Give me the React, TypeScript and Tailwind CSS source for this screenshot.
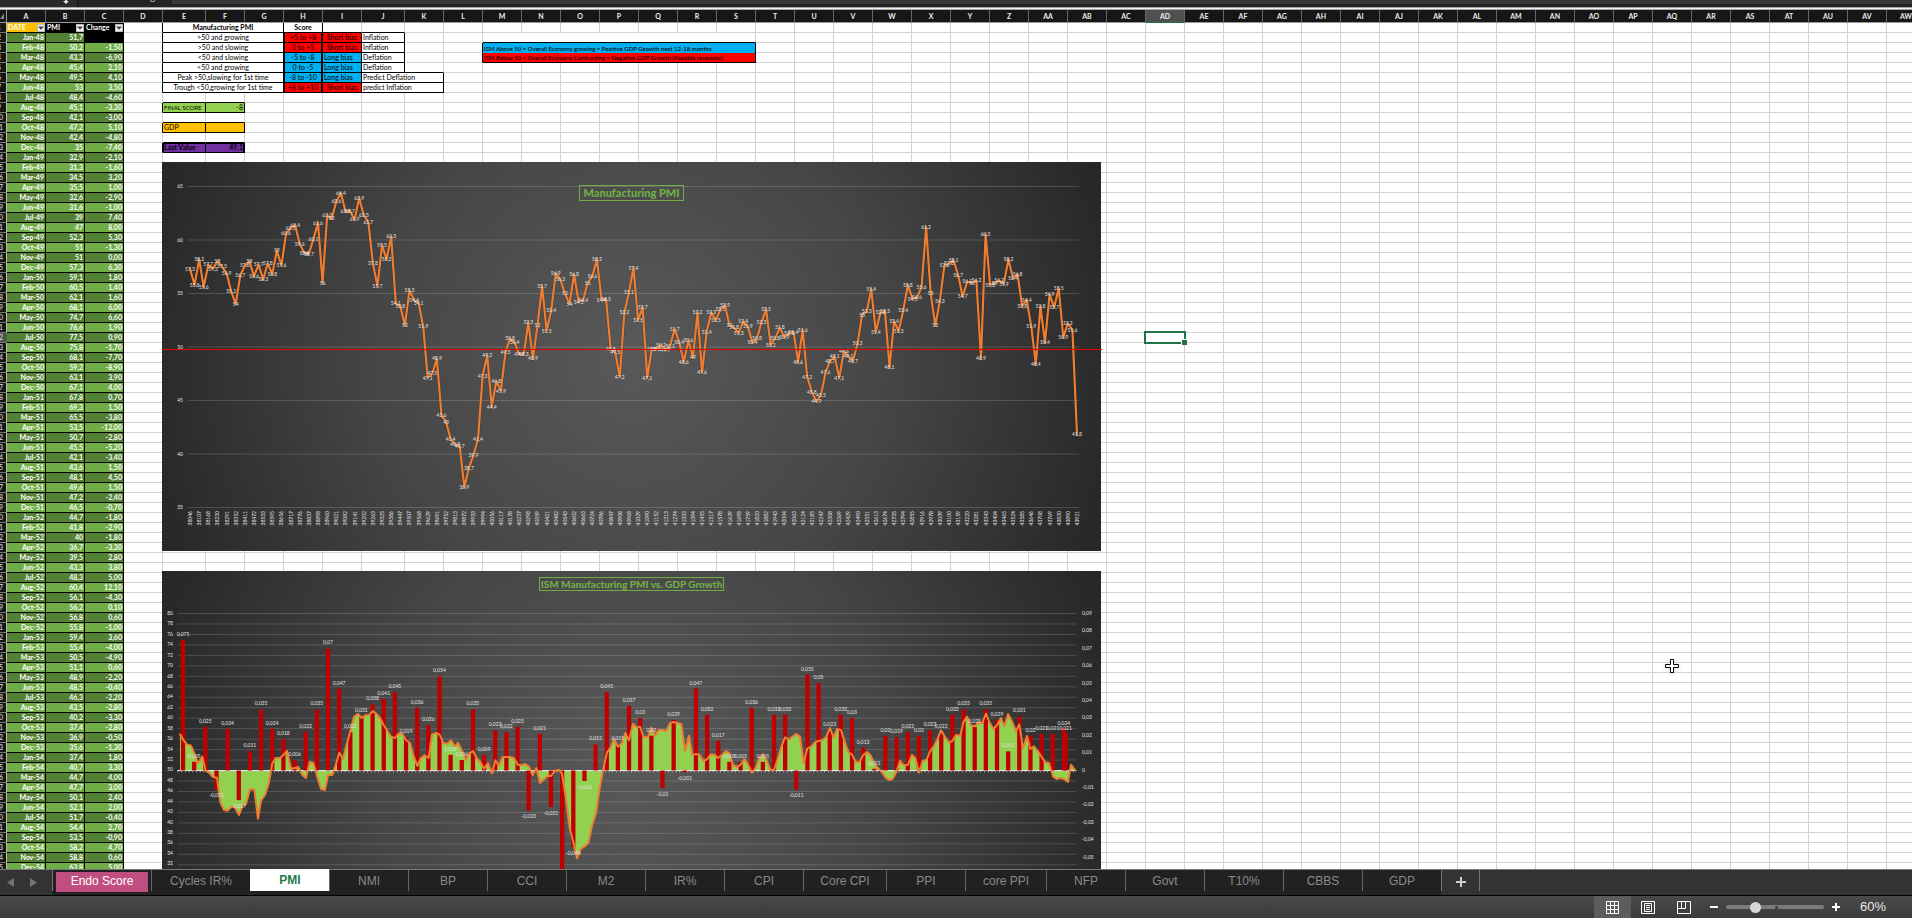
import React from "react";

type Cell = { text?: string; span?: number; right?: boolean; bottom?: boolean; look?: string };

const columnName = (n: number): string =>
  n < 26 ? String.fromCharCode(65 + n) : columnName(Math.floor(n / 26) - 1) + String.fromCharCode(65 + (n % 26));

const COLUMNS = Array.from({ length: 49 }, (_, i) => columnName(i));
const ROWS = Array.from({ length: 85 }, (_, i) => i + 1);
const MONTHS = ["Jan", "Feb", "Mar", "Apr", "May", "Jun", "Jul", "Aug", "Sep", "Oct", "Nov", "Dec"];

const HISTORY = [
  51.7, 50.2, 43.3, 45.4, 49.5, 53, 48.4, 45.1, 42.1, 47.2, 42.4, 35,
  32.9, 31.3, 34.5, 35.5, 32.6, 31.6, 39, 47, 52.3, 51, 51, 57.3,
  59.1, 60.5, 62.1, 68.1, 74.7, 76.6, 77.5, 75.8, 68.1, 59.2, 63.1, 67.1,
  67.8, 69.3, 65.5, 53.5, 50.7, 45.5, 42.1, 43.6, 48.1, 49.6, 47.2, 46.5,
  44.7, 41.8, 40, 36.7, 39.5, 43.3, 48.3, 60.4, 56.1, 56.2, 56.8, 55.8,
  59.4, 55.4, 50.5, 51.1, 48.9, 48.5, 46.3, 43.5, 40.2, 37.4, 36.9, 35.6,
  37.4, 40.7, 44.7, 47.7, 50.1, 52.1, 51.7, 54.4, 53.5, 58.2, 58.8, 63.8,
];

const comma = (v: number | string) => String(v).replace(".", ",");

const RED = "bg-[#ff0000] text-black";
const BLUE = "bg-[#00b0f0] text-black";
const CENTER = "text-center";

const CELLS: Record<string, Cell> = {
  E1: { text: "Manufacturing PMI", span: 3, right: true, bottom: true, look: "text-center font-bold" },
  H1: { text: "Score", right: true, bottom: true, look: "text-center font-bold" },
  I1: { bottom: true },
  J1: { bottom: true },
  K5: { bottom: true },
  M2: { span: 7, bottom: true },
  L3: { right: true },
  L4: { right: true },
  M3: { text: "ISM Above 50 = Overall Economy growing = Positive GDP Geowth next 12-18 months", span: 7, right: true, look: BLUE + " border-b-0 text-[6px] font-medium" },
  M4: { text: "ISM Below 50 = Overall Economy Contracting = Negative GDP Growth (Possible recession)", span: 7, right: true, bottom: true, look: RED + " text-[6px] font-medium" },
  D9: { right: true },
  D11: { right: true },
  D13: { right: true },
  E9: { text: "FINAL SCORE", right: true, bottom: true, look: "bg-[#92d050] text-[6px]" },
  F9: { text: "-8", right: true, bottom: true, look: "bg-[#92d050] text-right" },
  E11: { text: "GDP", right: true, bottom: true, look: "bg-[#ffc000]" },
  F11: { right: true, bottom: true, look: "bg-[#ffc000]" },
  E13: { text: "Last Value", right: true, bottom: true, look: "bg-[#7030a0] font-bold shadow-[inset_1px_1px_0_#000]" },
  F13: { text: "49,1", right: true, bottom: true, look: "bg-[#7030a0] text-right font-bold shadow-[inset_-1px_1px_0_#000]" },
};

[8, 10, 12].forEach((r) => {
  CELLS["E" + r] = { bottom: true };
  CELLS["F" + r] = { bottom: true };
});

const RULES: [string, string, string, string][] = [
  [">50 and growing", "+5 to +8", "Short bias", "Inflation"],
  [">50 and slowing", "0 to +5", "Short bias", "Inflation"],
  ["<50 and slowing", "-5 to -8", "Long bias", "Deflation"],
  ["<50 and growing", "0 to -5", "Long bias", "Deflation"],
  ["Peak >50,slowing for 1st time", "-8 to -10", "Long bias", "Predict Deflation"],
  ["Trough <50,growing for 1st time", "+8 to +10", "Short bias", "predict Inflation"],
];

CELLS.D1 = { right: true };
RULES.forEach(([rule, score, bias, outlook], i) => {
  const r = i + 2;
  const short = bias === "Short bias";
  const fill = short ? RED : BLUE;
  CELLS["D" + r] = { right: true };
  CELLS["E" + r] = { text: rule, span: 3, right: true, bottom: true, look: CENTER };
  CELLS["H" + r] = { text: score, right: true, bottom: true, look: fill + " text-center shadow-[inset_1px_0_0_#000,inset_-1px_0_0_#000]" };
  CELLS["I" + r] = { text: bias, right: true, bottom: true, look: fill + (short ? " text-center" : "") };
  CELLS["J" + r] = { text: outlook, span: i > 3 ? 2 : 1, right: true, bottom: true };
});

function FilterButton({ label }: { label: string }) {
  return (
    <button aria-label={label} className="flex h-2 w-2 shrink-0 items-center justify-center border border-[#bdbdbd] bg-[#f2f2f2]">
      <svg viewBox="0 0 6 4" className="h-1 w-1.5"><path d="M0 .5h6L3 3.8z" fill="#444" /></svg>
    </button>
  );
}

function SeriesCells({ row }: { row: number }) {
  if (row === 1) {
    return (
      <>
        {["DATE", "PMI", "Change"].map((t, i) => (
          <td key={t} className={"overflow-hidden border-r border-b border-black p-0 text-[7px] font-bold text-white " + (i === 0 ? "bg-[#ffc000]" : "bg-black")}>
            <div className="flex h-[9px] items-center justify-between pl-px">
              {t}
              <FilterButton label={"Filter " + t} />
            </div>
          </td>
        ))}
      </>
    );
  }
  const i = row - 2;
  const fill = row % 2 === 0 ? "bg-[#548235]" : "bg-[#70ad47]";
  const base = "overflow-hidden border-r border-b border-black py-0 pr-px pl-0 text-right font-bold text-white text-[7px] ";
  const known = i < HISTORY.length;
  const change = i > 0 && known ? Math.round((HISTORY[i] - HISTORY[i - 1]) * 10) / 10 : 0;
  return (
    <>
      <td className={base + fill}>{known ? `${MONTHS[i % 12]}-${48 + Math.floor(i / 12)}` : ""}</td>
      <td className={base + fill}>{known ? comma(HISTORY[i]) : ""}</td>
      <td className={base + (i === 0 ? "bg-black" : fill)}>{i > 0 && known ? comma(change.toFixed(2)) : ""}</td>
    </>
  );
}

function Row({ row }: { row: number }) {
  const cells: React.ReactNode[] = [];
  for (let c = 3; c < COLUMNS.length; ) {
    const id = COLUMNS[c] + row;
    const cell = CELLS[id] ?? {};
    cells.push(
      <td
        key={id}
        colSpan={cell.span ?? 1}
        className={
          "border-r border-b px-px py-0 " +
          (id === "AD32" ? "relative " : "overflow-hidden ") +
          (cell.right ? "border-r-black " : "border-r-[#d2d2d2] ") +
          (cell.bottom ? "border-b-black " : "border-b-[#d2d2d2] ") +
          (cell.look ?? "")
        }
      >
        {cell.text}
        {id === "AD32" && (
          <span className="absolute -inset-0.5 border-2 border-[#217346]">
            <span className="absolute -right-[3px] -bottom-[3px] h-1.5 w-1.5 border-t border-l border-white bg-[#217346]" />
          </span>
        )}
      </td>,
    );
    c += cell.span ?? 1;
  }
  const selected = row === 32;
  return (
    <tr className="h-[10px]">
      <th
        scope="row"
        className={
          "border-r border-b border-b-[#777] p-0 font-normal text-[#e0e0e0] " +
          (selected ? "border-r-[#217346] bg-[#505050]" : "border-r-[#bdbdbd] bg-[#161616]")
        }
      >
        <div className="-ml-2 w-3.5 text-center text-[7px]">{row}</div>
      </th>
      <SeriesCells row={row} />
      {cells}
    </tr>
  );
}

function Sheet() {
  return (
    <table className="w-max table-fixed border-separate border-spacing-0 text-[7px] leading-[9px] whitespace-nowrap text-black">
      <colgroup>
        <col className="w-[7px]" />
        {COLUMNS.map((c) => (
          <col key={c} className={c === "E" || c === "J" ? "w-[43px]" : "w-[39px]"} />
        ))}
      </colgroup>
      <thead>
        <tr className="h-[13px] text-[7px]">
          <td className="border-r border-b border-[#9a9a9a] bg-[#161616] p-0">
            <svg viewBox="0 0 6 12" className="block h-3 w-1.5"><path d="M4 3.500v5.500H0z" fill="#8a8a8a" /></svg>
          </td>
          {COLUMNS.map((c) => (
            <th
              key={c}
              scope="col"
              className={
                "border-r border-b border-r-[#666] p-0 text-center font-bold text-[#ededed] " +
                (c === "AD" ? "border-b-[#217346] bg-[#505050]" : "border-b-[#9a9a9a] bg-[#161616]")
              }
            >
              {c}
            </th>
          ))}
        </tr>
      </thead>
      <tbody>
        {ROWS.map((r) => (
          <Row key={r} row={r} />
        ))}
      </tbody>
    </table>
  );
}

const PMI = [
  57.3, 55.8, 58.2, 55.6, 57.7, 57.3, 58, 57.5, 56.9, 55.2, 54, 56.7, 57.6, 58, 56.6, 57.7, 56.3, 57.8, 56.8, 59,
  57.6, 60.6, 61.1, 61.4, 59.6, 58.8, 58.7, 60.1, 61.6, 56, 62.3, 62, 63.6, 64.4, 62.7, 62.7, 61.9, 63.9, 62.3, 61.7,
  57.8, 55.7, 59.5, 58.2, 60.3, 54.1, 53.8, 52, 55.3, 54.4, 54.1, 51.9, 47.1, 47.5, 48.9, 43.6, 43, 41.4, 40.9, 40.7,
  36.9, 38.7, 39.9, 41.4, 47.3, 49.2, 44.4, 46.8, 45.9, 49.5, 50.8, 50.4, 49.3, 49.3, 52.3, 48.9, 52, 55.7, 51.5, 53.4,
  56.9, 56.3, 55, 54, 56.8, 54.2, 54.4, 56, 56.6, 58.2, 54.4, 54.5, 49.8, 49.5, 47.2, 53.2, 55.1, 57.4, 52.5, 53.7,
  47.1, 49.8, 49.8, 50.2, 49.7, 50.1, 51.7, 50.4, 48.6, 50.6, 49, 53.2, 47.6, 51.4, 53.2, 52.5, 53.5, 53.9, 52, 51.8,
  51.3, 52.4, 51.9, 50.4, 50.8, 52.3, 53.5, 50.2, 50.8, 51.8, 50.9, 51.3, 51.4, 48.6, 51.6, 47.2, 45.8, 44.9, 45.5, 47.6,
  48.7, 49.1, 47.1, 49.6, 49.1, 48.7, 50.3, 53, 53.3, 55.4, 51.4, 53.2, 53.3, 48.1, 52.4, 51.5, 53.4, 55.8, 54.5, 54.6,
  55.6, 61.2, 55, 52, 54.3, 57.6, 57.8, 58.1, 56.7, 54.7, 56.1, 56, 56.2, 48.9, 60.5, 55.8, 56, 56.2, 55.9, 58.2,
  56.4, 56.8, 53.8, 54.4, 51.9, 48.4, 53.8, 50.4, 54.9, 53.7, 55.5, 50.9, 52.2, 51.6, 41.8,
];

// Serial numbers of every second month end, counted from 30 December 1899.
const SERIALS = Array.from({ length: 97 }, (_, k) =>
  Math.round((Date.UTC(2004, 2 + k * 2, 0) - Date.UTC(1899, 11, 30)) / 86400000),
).concat(43921);

function Backdrop({ id }: { id: string }) {
  return (
    <>
      <defs>
        <radialGradient id={id} gradientUnits="userSpaceOnUse" cx="469" cy="195" r="508">
          <stop offset="0" stopColor="#595959" />
          <stop offset=".5" stopColor="#464646" />
          <stop offset="1" stopColor="#262626" />
        </radialGradient>
      </defs>
      <rect width="939" height="389" fill={`url(#${id})`} />
    </>
  );
}

function PmiChart() {
  const px = (i: number) => 28 + (i * 887) / 194;
  const py = (v: number) => 24.5 + (65 - v) * 10.7;
  return (
    <figure className="absolute top-[152px] left-[162px] h-[389px] w-[939px]">
      <svg viewBox="0 0 939 389" className="absolute inset-0 h-full w-full overflow-visible" fontFamily="Lato, sans-serif" fontSize="5" fill="#e3e3e3">
        <Backdrop id="pmi-back" />
        {[65, 60, 55, 50, 45, 40, 35].map((v) => (
          <g key={v}>
            <path d={`M25.500 ${py(v)}H917`} stroke="#fff" strokeOpacity=".16" />
            <text x="21" y={py(v) + 1.5} textAnchor="end">{v}</text>
          </g>
        ))}
        {SERIALS.map((s, i) => (
          <text key={s} transform={`translate(${px(i * 2) + 2} 349) rotate(-90)`} textAnchor="end">
            {s}
          </text>
        ))}
        <polyline points={PMI.map((v, i) => `${px(i)},${py(v) + 0.7}`).join(" ")} fill="none" stroke="#000" strokeOpacity=".3" strokeWidth="3" strokeLinejoin="round" />
        <polyline points={PMI.map((v, i) => `${px(i)},${py(v)}`).join(" ")} fill="none" stroke="#ed7d31" strokeWidth="2.200" strokeLinejoin="round" strokeLinecap="round" />
        {PMI.map((v, i) => (
          <text key={i} x={px(i)} y={py(v) + 1.7} textAnchor="middle">{comma(v)}</text>
        ))}
        <path d="M0 187.500H940" stroke="#e80000" />
      </svg>
      <figcaption className="relative mx-auto mt-[23px] flex h-4 w-max items-center border border-[#70ad47] px-[3px] text-[11px] font-black text-[#70ad47]">
        Manufacturing PMI
      </figcaption>
    </figure>
  );
}

const GDP = [
  0.075, 0.005, 0.025, -0.011, 0.024, -0.017, 0.011, 0.035, 0.024, 0.018, 0.006, 0.022, 0.035, 0.07, 0.047, 0.022,
  0.031, 0.038, 0.041, 0.045, 0.019, 0.036, 0.026, 0.054, 0.009, 0.006, 0.035, 0.009, 0.023, 0.022, 0.025, -0.023,
  0.021, -0.021, -0.084, -0.044, -0.006, 0.015, 0.045, 0.015, 0.037, 0.03, 0.02, -0.01, 0.029, -0.001, 0.047, 0.032,
  0.017, 0.005, 0.005, 0.036, 0.005, 0.032, 0.032, -0.011, 0.055, 0.05, 0.023, 0.032, 0.03, 0.013, 0.001, 0.02,
  0.019, 0.022, 0.02, 0.023, 0.022, 0.032, 0.035, 0.025, 0.035, 0.029, 0.011, 0.031, 0.02, 0.021, 0.021, 0.024, 0.021,
];

// Trend as x,y pairs in thirds of a chart unit.
const TREND =
  "54,490 64,507 75,520 87,524 97,547 108,577 121,557 131,599 141,605 153,618 165,620 175,694 186,717 197,719 211,705 220,712 231,732 243,702 252,699 264,654 277,656 288,743 297,689 309,672 320,639 331,577 341,561 354,561 364,552 375,540 387,593 399,591 409,588 421,612 432,621 443,573 454,575 465,615 477,654 489,657 498,612 511,612 521,582 532,545 543,563 554,520 566,477 576,437 588,429 599,441 610,433 622,431 633,420 644,429 654,441 665,462 677,481 687,497 699,501 710,487 721,489 732,507 744,516 755,555 766,585 776,562 788,553 800,561 810,490 822,486 833,491 844,516 856,518 867,508 879,527 888,515 900,539 912,567 922,547 933,540 944,561 955,573 966,593 978,576 990,607 1000,568 1011,584 1022,558 1033,558 1045,558 1056,561 1067,581 1079,582 1090,579 1101,587 1112,612 1123,591 1134,636 1146,625 1156,615 1167,615 1179,599 1191,597 1200,608 1211,677 1223,772 1234,813 1245,862 1257,833 1268,826 1279,816 1290,765 1302,727 1313,651 1323,597 1335,544 1346,529 1356,504 1368,527 1379,517 1390,486 1401,508 1413,458 1424,470 1434,467 1445,498 1458,498 1468,470 1479,494 1490,477 1501,477 1513,480 1524,456 1535,453 1546,456 1558,459 1569,541 1581,494 1591,552 1602,549 1613,551 1624,570 1635,565 1646,550 1658,551 1668,561 1680,551 1692,540 1702,546 1713,582 1725,588 1736,581 1747,564 1758,580 1770,605 1781,591 1792,561 1803,550 1814,567 1825,597 1836,597 1847,564 1858,527 1869,499 1881,505 1892,497 1903,489 1914,497 1925,576 1936,532 1948,527 1959,513 1971,510 1981,507 1992,499 2004,471 2015,500 2025,474 2037,477 2047,508 2059,544 2070,550 2081,573 2093,573 2103,553 2115,543 2125,552 2137,577 2148,591 2159,602 2170,619 2181,627 2192,624 2204,601 2214,570 2226,583 2238,581 2250,552 2260,561 2271,605 2282,570 2294,566 2304,541 2315,527 2326,505 2337,478 2349,497 2360,514 2371,510 2382,492 2395,494 2404,454 2415,437 2426,463 2439,466 2449,454 2460,457 2472,428 2482,453 2494,474 2505,463 2517,441 2527,466 2538,429 2550,451 2562,480 2572,460 2583,532 2595,495 2605,534 2616,526 2627,540 2639,558 2650,574 2661,576 2673,616 2684,624 2695,621 2706,624 2718,633 2727,581 2740,598";

function GdpChart() {
  const zero = 199.5;
  const barX = (i: number) => (i === 80 ? 903.5 : 21 + i * 11.15);
  const barY = (v: number) => zero - v * 1743;
  const left = Array.from({ length: 31 }, (_, k) => 80 - k * 2);
  const right = Array.from({ length: 16 }, (_, k) => (9 - k) / 100);
  const points = TREND.split(" ");
  return (
    <figure className="absolute top-[561px] left-[162px] h-[389px] w-[939px]">
      <svg viewBox="0 0 939 389" className="absolute inset-0 h-full w-full" fontFamily="Lato, sans-serif" fontSize="5" fill="#e3e3e3">
        <Backdrop id="gdp-back" />
        {left.map((v, k) => (
          <g key={v}>
            <path d={`M15.500 ${42.5 + k * 10.47}H914.500`} stroke="#fff" strokeOpacity=".16" />
            <text x="11" y={44 + k * 10.43} textAnchor="end">{v}</text>
          </g>
        ))}
        {right.map((v, k) => (
          <text key={v} x="920" y={44 + k * 17.4}>{comma(v)}</text>
        ))}
        <polygon points={`54,598 ${points.join(" ")} 2740,598`} transform="scale(.33333)" fill="#92d050" />
        <path d="M15.500 199.500H914.500" stroke="#e8e8e8" />
        <path d="M15.500 200.500H914.500" stroke="#d0d0d0" strokeWidth="1.500" strokeDasharray=".8 2.917" />
        {GDP.map((v, i) => (
          <rect key={i} x={barX(i) - 2.1} y={Math.min(zero, barY(v))} width="4.300" height={Math.abs(v * 1743)} fill="#c00000" />
        ))}
        <polyline points={points.join(" ")} transform="scale(.33333)" fill="none" stroke="#ed7d31" strokeWidth="6" strokeLinejoin="round" strokeLinecap="round" />
        {GDP.map((v, i) => (
          <text key={i} x={barX(i)} y={barY(v) + (v > 0 ? -4 : 7.700)} textAnchor="middle">{comma(v)}</text>
        ))}
      </svg>
      <figcaption className="relative mx-auto mt-1.5 flex h-3.5 w-max items-center border border-[#70ad47] px-px text-[10px] font-black text-[#70ad47]">
        ISM Manufacturing PMI vs. GDP Growth
      </figcaption>
    </figure>
  );
}

const TABS: [string, string][] = [
  ["Cycles IR%", "w-[99px]"], ["PMI", "w-[79px]"], ["NMI", "w-[79px]"], ["BP", "w-[79px]"], ["CCI", "w-[79px]"],
  ["M2", "w-[79px]"], ["IR%", "w-[79px]"], ["CPI", "w-[79px]"], ["Core CPI", "w-[83px]"], ["PPI", "w-[79px]"],
  ["core PPI", "w-[81px]"], ["NFP", "w-[79px]"], ["Govt", "w-[79px]"], ["T10%", "w-[79px]"], ["CBBS", "w-[79px]"], ["GDP", "w-[79px]"],
];

function TabBar() {
  return (
    <nav className="flex h-[27px] shrink-0 border-t border-b border-t-[#777] border-b-black bg-[#333] text-[12px]">
      <div className="flex w-[52px] shrink-0 items-center gap-4 pl-[7px]">
        <button aria-label="Previous sheets"><svg viewBox="0 0 7 9" className="h-[9px] w-[7px]"><path d="M7 0v9L0 4.500z" fill="#737373" /></svg></button>
        <button aria-label="Next sheets"><svg viewBox="0 0 7 9" className="h-[9px] w-[7px]"><path d="M0 0v9l7-4.500z" fill="#737373" /></svg></button>
      </div>
      <div className="flex bg-[#212121] pb-1">
        <div className="w-[99px] border-l border-[#777] px-[3px] pt-0.5">
          <button className="h-5 w-full bg-[#c04e80] pb-0.5 text-white">Endo Score</button>
        </div>
        {TABS.map(([name, width]) =>
          name === "PMI" ? (
            <button key={name} className={width + " -mt-px border-l border-white bg-white font-bold text-[#1f7a4a]"}>{name}</button>
          ) : (
            <button key={name} className={width + " border-l border-[#666] text-[#8a8a8a]"}>{name}</button>
          ),
        )}
      </div>
      <div className="pb-1">
        <button aria-label="New sheet" className="flex h-full w-[39px] items-center justify-center border-r border-l border-[#777]">
          <svg viewBox="0 0 10 10" className="mt-0.5 h-2.5 w-2.5"><path d="M5 0v10M0 5h10" stroke="#ccc" strokeWidth="2" /></svg>
        </button>
      </div>
    </nav>
  );
}

function StatusBar() {
  return (
    <footer className="flex h-[22px] shrink-0 items-stretch justify-end bg-linear-to-b from-[#4a4a4a] to-[#3a3a3a] text-white">
      <button aria-label="Normal view" className="flex w-[37px] items-center justify-center bg-[#5c5c5c]">
        <svg viewBox="0 0 13 13" className="h-[13px] w-[13px]" fill="none" stroke="#fff"><path d="M.5.500h12v12H.5zM4.500.500v12M8.500.500v12M.5 4.500h12M.5 8.500h12" /></svg>
      </button>
      <button aria-label="Page layout view" className="flex w-[34px] items-center justify-center">
        <svg viewBox="0 0 14 13" className="h-[13px] w-3.5" fill="none" stroke="#fff"><path d="M.5.500h13v12H.5zM3.500 2.500h7v8h-7zM5 4.500h4M5 6.500h4M5 8.500h4" /></svg>
      </button>
      <button aria-label="Page break view" className="flex w-[37px] items-center justify-center">
        <svg viewBox="0 0 14 13" className="h-[13px] w-3.5" fill="none" stroke="#fff"><path d="M.5.500h13v12H.5zM.5 7.500h8V.500M4.500.500v7" /></svg>
      </button>
      <button aria-label="Zoom out" className="flex w-6 items-center justify-center">
        <svg viewBox="0 0 8 8" className="h-2 w-2"><path d="M0 4h8" stroke="#fff" strokeWidth="2" /></svg>
      </button>
      <div className="relative flex items-center">
        <input
          type="range"
          aria-label="Zoom"
          defaultValue={28}
          className="h-1 w-[98px] appearance-none rounded-full bg-[#7b7b7b] [&::-webkit-slider-thumb]:h-[11px] [&::-webkit-slider-thumb]:w-[11px] [&::-webkit-slider-thumb]:appearance-none [&::-webkit-slider-thumb]:rounded-full [&::-webkit-slider-thumb]:bg-[#d6d6d6]"
        />
        <span className="pointer-events-none absolute left-1/2 h-[3px] w-[3px] rounded-full bg-[#3a3a3a]" />
      </div>
      <button aria-label="Zoom in" className="flex w-6 items-center justify-center">
        <svg viewBox="0 0 8 8" className="h-2 w-2"><path d="M0 4h8M4 0v8" stroke="#fff" strokeWidth="2" /></svg>
      </button>
      <output className="flex w-16 items-center pl-3 text-[13px] text-[#e6e6e6]">60%</output>
    </footer>
  );
}

export default function App() {
  return (
    <div className="flex h-screen flex-col overflow-hidden bg-white font-['Liberation_Sans',Arial,sans-serif]">
      <header className="flex h-[7px] shrink-0 bg-[#232323]">
        <div className="flex w-[78px] justify-end border-r border-[#111] bg-[#2a2a2a] pr-2">
          <svg viewBox="0 0 6 4" className="h-1 w-1.5"><path d="M2 0h2v1h2L3 4 0 1h2z" fill="#ddd" /></svg>
        </div>
        <div className="flex w-[94px] justify-end pr-4">
          <svg viewBox="0 0 6 3" className="h-[3px] w-1.5"><path d="M1 0v1.500h3L5 0" fill="none" stroke="#aaa" /></svg>
        </div>
        <div className="h-1 flex-1 bg-[#383838]" />
      </header>
      <div className="h-[3px] shrink-0 border-t border-b border-[#a8a8a8] bg-[#f2f2f2]" />
      <main className="relative min-h-0 flex-1 overflow-hidden font-['Lato',sans-serif]">
        <Sheet />
        <PmiChart />
        <GdpChart />
        <svg viewBox="0 0 16 16" className="absolute top-[648px] left-[1664px] h-4 w-4 drop-shadow-sm">
          <path d="M6.500 1.500h3v5h5v3h-5v5h-3v-5h-5v-3h5z" fill="#fff" stroke="#000" />
        </svg>
      </main>
      <TabBar />
      <StatusBar />
    </div>
  );
}
